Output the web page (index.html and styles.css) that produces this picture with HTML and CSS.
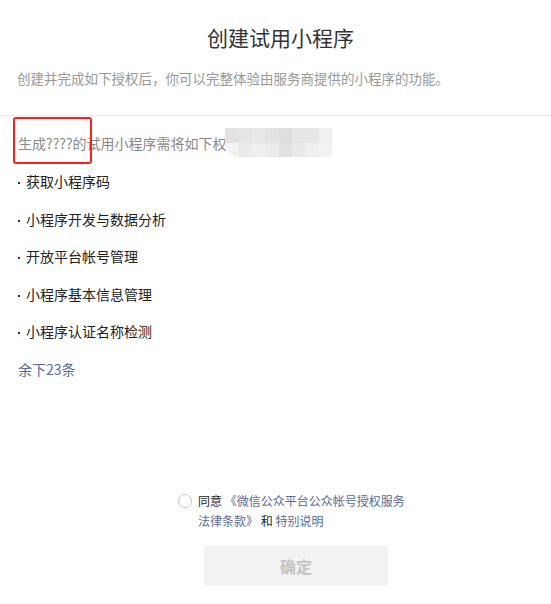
FILE: index.html
```html
<!DOCTYPE html>
<html lang="zh-CN">
<head>
  <meta charset="UTF-8">
  <meta name="viewport" content="width=device-width, initial-scale=1.0">
  <title>创建试用小程序</title>
  <link rel="stylesheet" href="styles.css">
</head>
<body>
  <div class="header">
    <h1 class="title">创建试用小程序</h1>
    <p class="desc">创建并完成如下授权后，你可以完整体验由服务商提供的小程序的功能。</p>
  </div>

  <div class="intro">
    生成????的试用小程序需将如下权
    <div class="mosaic">
      <span style="background:#e2e2e2"></span><span style="background:#e5e5e5"></span><span style="background:#e8e8e8"></span><span style="background:#e3e3e3"></span><span style="background:#dedede"></span><span style="background:#e6e6e6"></span><span style="background:#e5e6e8"></span><span style="background:#eef0f1"></span>
      <span style="background:#f3f3f3"></span><span style="background:#ebebeb"></span><span style="background:#efefef"></span><span style="background:#ebebeb"></span><span style="background:#e1e1e1"></span><span style="background:#e9e9e9"></span><span style="background:#eeefef"></span><span style="background:#f2f2f2"></span>
    </div>
    <div class="mark"></div>
  </div>

  <ul class="perm-list">
    <li>获取小程序码</li>
    <li>小程序开发与数据分析</li>
    <li>开放平台帐号管理</li>
    <li>小程序基本信息管理</li>
    <li>小程序认证名称检测</li>
  </ul>
  <a class="more">余下23条</a>

  <div class="footer">
    <div class="agree">
      <span class="radio"></span>
      <p class="agree-text">同意 <a>《微信公众平台公众帐号授权服务</a><br><a>法律条款》</a> 和 <a>特别说明</a></p>
    </div>
    <button class="confirm-btn" disabled>确定</button>
  </div>
</body>
</html>
```

FILE: styles.css
```css
body {
  margin: 0;
  font-family: "Noto Sans CJK SC", "Liberation Sans", sans-serif;
  color: #222;
  background: #fff;
}

.header {
  padding-top: 20px;
  border-bottom: 1px solid #ececec;
}

.title {
  margin: 0;
  padding-left: 10px;
  font-size: 21px;
  font-weight: normal;
  line-height: 34px;
  text-align: center;
  color: #333;
}

.desc {
  margin: 14px 0 0;
  padding: 0 17px 27px;
  font-size: 13.5px;
  line-height: 20px;
  color: #999;
}

.intro {
  position: relative;
  margin-top: 17px;
  padding-left: 18px;
  font-size: 14px;
  line-height: 20px;
  color: #8a8a8a;
}

.mosaic {
  position: absolute;
  left: 225px;
  top: -5px;
  width: 107px;
  height: 29px;
  display: grid;
  grid-template-columns: repeat(8, 1fr);
  border-radius: 0 0 0 14px;
  overflow: hidden;
}

.mark {
  position: absolute;
  left: 13px;
  top: -16px;
  width: 75px;
  height: 43px;
  border: 2px solid #f5221d;
  border-radius: 3px;
}

.perm-list {
  list-style: none;
  margin: 10px 0 0;
  padding: 0 0 0 18px;
  font-size: 14px;
  line-height: 37.5px;
  color: #222;
}

.perm-list li::before {
  content: "";
  display: inline-block;
  width: 2px;
  height: 2px;
  margin-right: 6px;
  vertical-align: middle;
  background: #333;
}

.more {
  display: block;
  padding-left: 18px;
  font-size: 14px;
  line-height: 37.5px;
  color: #576b95;
}

.footer {
  margin-top: 103px;
}

.agree {
  display: flex;
  align-items: flex-start;
  margin-left: 178px;
}

.radio {
  flex: none;
  width: 12px;
  height: 12px;
  margin-top: 3px;
  border: 1px solid #c9c9c9;
  border-radius: 50%;
}

.agree-text {
  width: 220px;
  margin: 0 0 0 6px;
  font-size: 12px;
  line-height: 20px;
  color: #222;
}

.agree-text a {
  color: #576b95;
}

.confirm-btn {
  display: block;
  width: 184px;
  height: 41px;
  margin: 14px 0 0 204px;
  border: none;
  border-radius: 4px;
  background-color: #f2f2f2;
  color: #c4c4c4;
  font-family: inherit;
  font-size: 16px;
  font-weight: bold;
}
```
